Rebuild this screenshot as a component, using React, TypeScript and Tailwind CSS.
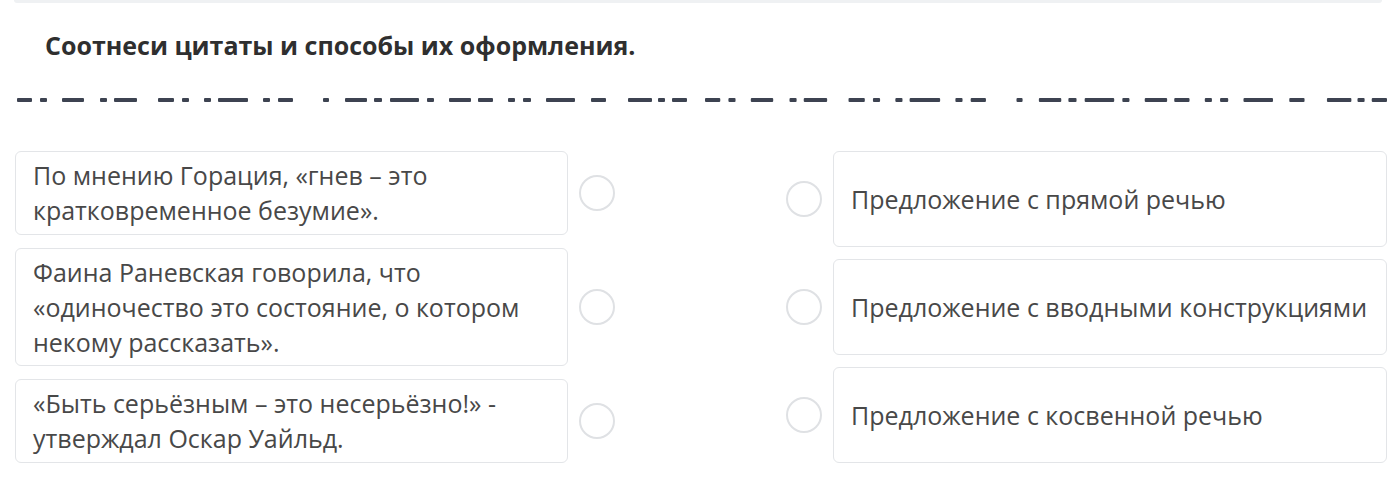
const dashes: [number, number][] = [
  [17, 32], [40, 47], [62, 84], [100, 107], [114, 137], [158, 174], [182, 189], [204, 211],
  [218, 248], [263, 270], [278, 293], [323, 329], [345, 367], [374, 382], [390, 419], [427, 434],
  [449, 471], [478, 493], [508, 515], [523, 531], [546, 575], [591, 606], [628, 652], [658, 665],
  [672, 687],
]

const quotes = [
  { text: 'По мнению Горация, «гнев – это кратковременное безумие».', h: 'h-[84px]' },
  { text: 'Фаина Раневская говорила, что «одиночество это состояние, о котором некому рассказать».', h: 'h-[118px]' },
  { text: '«Быть серьёзным – это несерьёзно!» - утверждал Оскар Уайльд.', h: 'h-[84px]' },
]

const kinds = [
  'Предложение с прямой речью',
  'Предложение с вводными конструкциями',
  'Предложение с косвенной речью',
]

function Divider() {
  // two copies of the pattern, the second a bit wider
  const second = dashes.map(([a, b]) => [705 + ((a - 17) * 682) / 670, 705 + ((b - 17) * 682) / 670])
  return (
    <svg width="1396" height="8" className="block">
      {[...dashes, ...second].map(([a, b], i) => (
        <rect key={i} x={a} y={2} width={b - a} height={4} rx={1} fill="#3d4351" />
      ))}
    </svg>
  )
}

function Radio() {
  return <div className="w-[36px] h-[36px] rounded-full border-2 border-[#dfe1e4] bg-white shrink-0" />
}

export default function App() {
  return (
    <main className="w-[1396px] h-[479px] bg-white overflow-hidden font-['Open_Sans',sans-serif]">
      <div className="mx-[14px] h-[3px] rounded-b bg-[#eff1f3]" />
      <h2 className="pl-[45px] pt-[26px] text-[25px] leading-[32px] font-bold text-[#2f2f2f]">
        Соотнеси цитаты и способы их оформления.
      </h2>
      <div className="pt-[35px]">
        <Divider />
      </div>
      <section className="flex pt-[47px] pl-[15px]">
        <div className="flex flex-col gap-[13px] w-[553px]">
          {quotes.map((q) => (
            <div
              key={q.text}
              className={`${q.h} flex items-center rounded-md border border-[#e3e5e8] px-[17px] text-[25px] leading-[35px] text-[#484848]`}
            >
              {q.text}
            </div>
          ))}
        </div>
        <div className="flex flex-col gap-[13px] ml-[11px]">
          {quotes.map((q) => (
            <div key={q.text} className={`${q.h} flex items-center`}>
              <Radio />
            </div>
          ))}
        </div>
        <div className="flex flex-col gap-[12px] ml-[171px]">
          {kinds.map((k) => (
            <div key={k} className="h-[96px] flex items-center">
              <Radio />
            </div>
          ))}
        </div>
        <div className="flex flex-col gap-[12px] ml-[11px] w-[554px]">
          {kinds.map((k) => (
            <div
              key={k}
              className="h-[96px] flex items-center rounded-md border border-[#e3e5e8] px-[17px] text-[25px] leading-[35px] text-[#484848] whitespace-nowrap"
            >
              {k}
            </div>
          ))}
        </div>
      </section>
    </main>
  )
}
